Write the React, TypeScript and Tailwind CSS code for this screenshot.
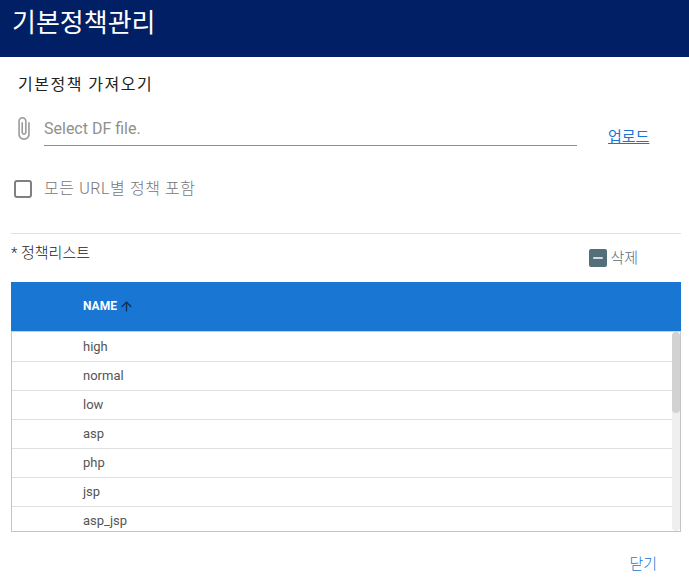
import { ArrowUp, Minus } from 'lucide-react';

const FONT = "font-['Roboto','Noto_Sans_CJK_KR',sans-serif]";
const ROWS = ['high', 'normal', 'low', 'asp', 'php', 'jsp', 'asp_jsp'];

export default function App() {
  return (
    <div className={`${FONT} w-[689px] h-[588px] overflow-hidden bg-white`}>
      <header className="h-[57px] bg-[#001f64] pl-3 pt-[5px] text-[26px] leading-[36px] text-white">기본정책관리</header>

      <div className="pl-[18px] pt-[17px] text-[16px] tracking-[1.5px] leading-[22px] text-[#222]">기본정책 가져오기</div>

      <div className="mt-[14px] flex h-[36px] items-start pl-[11px]">
        <svg viewBox="0 0 24 24" className="mt-[6px] h-[25px] w-[25px] fill-[#999]">
          <path d="M16.5 6v11.5c0 2.21-1.79 4-4 4s-4-1.79-4-4V5c0-1.38 1.12-2.5 2.5-2.5s2.5 1.12 2.5 2.5v10.5c0 .55-.45 1-1 1s-1-.45-1-1V6H10v9.5c0 1.38 1.12 2.5 2.5 2.5s2.5-1.12 2.5-2.5V5c0-2.21-1.79-4-4-4S7 2.79 7 5v12.5c0 3.04 2.46 5.5 5.5 5.5s5.5-2.46 5.5-5.5V6h-1.5z" />
        </svg>
        <div className="ml-[8px] h-[36px] w-[533px] border-b border-[#8f8f8f] pt-[9px] text-[16px] leading-[20px] text-[#8f8f8f]">Select DF file.</div>
        <a className="ml-[31px] mt-[17px] text-[15px] leading-[20px] text-[#1976d2] underline">업로드</a>
      </div>

      <div className="mt-[32px] flex items-center pl-[14px]">
        <div className="h-[18px] w-[18px] rounded-[3px] border-2 border-[#808080]" />
        <span className="ml-[12px] text-[16px] tracking-[0.6px] font-light leading-[22px] text-[#777]">모든 URL별 정책 포함</span>
      </div>

      <div className="ml-[11px] mr-[8px] mt-[33px] border-t border-[#e0e0e0]" />

      <div className="flex h-[48px] items-start pl-[11px] pr-[8px]">
        <span className="pt-[9px] text-[15px] font-light leading-[20px] text-[#222]">* 정책리스트</span>
        <div className="ml-auto mr-[43px] mt-[15px] flex items-center">
          <div className="flex h-[18px] w-[18px] items-center justify-center rounded-[2px] bg-[#546e7a]">
            <Minus className="h-[14px] w-[14px] text-white" strokeWidth={3} />
          </div>
          <span className="ml-[3px] text-[15px] font-light leading-[18px] text-[#546e7a]">삭제</span>
        </div>
      </div>

      <div className="ml-[11px] mr-[8px]">
        <div className="flex h-[50px] items-center border-b border-[#d0d0d0] bg-[#1976d2] pb-[1px] pl-[72px]">
          <span className="text-[12px] font-bold text-white">NAME</span>
          <ArrowUp className="ml-[2px] h-[15px] w-[15px] text-[#0d2c54]" strokeWidth={2} />
        </div>
        <div className="relative h-[200px] overflow-hidden border-x border-b border-[#c4c4c4] pt-[1px]">
          {ROWS.map(name => (
            <div key={name} className="flex h-[29px] items-center border-b border-[#e0e0e0] pl-[71px] text-[13px] text-[#555]">{name}</div>
          ))}
          <div className="absolute right-0 top-0 h-full w-[8px] rounded-[4px] bg-[#efefef]">
            <div className="h-[81px] rounded-[4px] bg-[#d2d2d2]" />
          </div>
        </div>
      </div>

      <div className="flex justify-end pr-[32px] pt-[22px] text-[15px] font-light leading-[20px] text-[#1976d2]">닫기</div>
    </div>
  );
}
